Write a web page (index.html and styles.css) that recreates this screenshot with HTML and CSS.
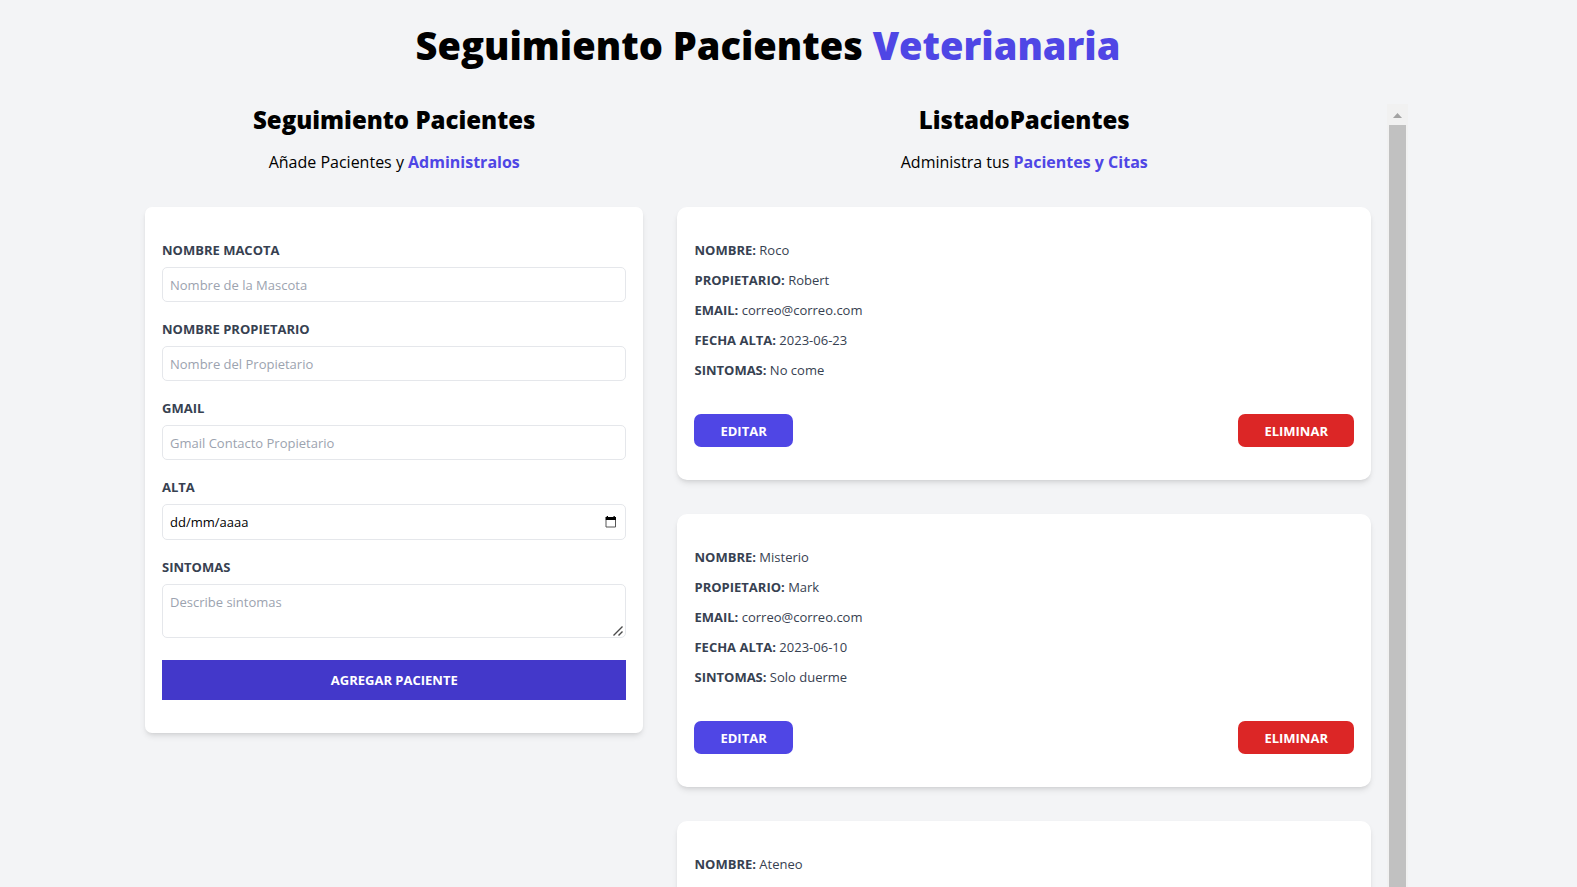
FILE: index.html
```html
<!DOCTYPE html>
<html lang="es">
<head>
<meta charset="utf-8">
<meta name="viewport" content="width=device-width, initial-scale=1">
<title>Seguimiento Pacientes Veterianaria</title>
<link rel="stylesheet" href="styles.css">
</head>
<body>
<div class="container">
  <h1 class="title">Seguimiento Pacientes <span class="accent">Veterianaria</span></h1>
  <main class="columns">
    <section class="form-column">
      <h2 class="subtitle">Seguimiento Pacientes</h2>
      <p class="lead">Añade Pacientes y <span class="accent strong">Administralos</span></p>
      <form class="card form-card">
        <div class="field">
          <label class="label" for="mascota">Nombre Macota</label>
          <input class="input" id="mascota" type="text" placeholder="Nombre de la Mascota">
        </div>
        <div class="field">
          <label class="label" for="propietario">Nombre Propietario</label>
          <input class="input" id="propietario" type="text" placeholder="Nombre del Propietario">
        </div>
        <div class="field">
          <label class="label" for="email">Gmail</label>
          <input class="input" id="email" type="email" placeholder="Gmail Contacto Propietario">
        </div>
        <div class="field">
          <label class="label" for="alta">Alta</label>
          <div class="input date-box">
            <input class="date-input" id="alta" type="text" placeholder="dd/mm/aaaa">
            <button class="date-button" type="button" aria-label="Abrir calendario">
              <svg width="12" height="12" viewBox="0 0 12 12"><path d="M1 4v7h9.500V4" fill="none" stroke="#555"/><path d="M.5 1h1.200V0h1.300v1h5.500V0h1.300v1H11v3H.5z" fill="#000"/></svg>
            </button>
          </div>
        </div>
        <div class="field">
          <label class="label" for="sintomas">Sintomas</label>
          <div class="textarea-box">
            <textarea class="input textarea" id="sintomas" placeholder="Describe sintomas"></textarea>
            <svg class="grip" width="10" height="10" viewBox="0 0 10 10" fill="none" stroke="#4a4a4a" stroke-width="1.400"><path d="M.5 9.500l9-9M5.500 9.500l4-4"/></svg>
          </div>
        </div>
        <button class="submit" type="submit">Agregar Paciente</button>
      </form>
    </section>
    <section class="list-column">
      <h2 class="subtitle">ListadoPacientes</h2>
      <p class="lead">Administra tus <span class="accent strong">Pacientes y Citas</span></p>
      <div class="list">
        <article class="card patient">
          <p class="row"><b class="key">Nombre:</b> Roco</p>
          <p class="row"><b class="key">Propietario:</b> Robert</p>
          <p class="row"><b class="key">Email:</b> correo@correo.com</p>
          <p class="row"><b class="key">Fecha Alta:</b> 2023-06-23</p>
          <p class="row"><b class="key">Sintomas:</b> No come</p>
          <div class="actions"><button class="btn edit" type="button">Editar</button><button class="btn delete" type="button">Eliminar</button></div>
        </article>
        <article class="card patient">
          <p class="row"><b class="key">Nombre:</b> Misterio</p>
          <p class="row"><b class="key">Propietario:</b> Mark</p>
          <p class="row"><b class="key">Email:</b> correo@correo.com</p>
          <p class="row"><b class="key">Fecha Alta:</b> 2023-06-10</p>
          <p class="row"><b class="key">Sintomas:</b> Solo duerme</p>
          <div class="actions"><button class="btn edit" type="button">Editar</button><button class="btn delete" type="button">Eliminar</button></div>
        </article>
        <article class="card patient">
          <p class="row"><b class="key">Nombre:</b> Ateneo</p>
        </article>
      </div>
    </section>
    <div class="scrollbar" aria-hidden="true">
      <div class="scroll-up"><svg width="9" height="5" viewBox="0 0 9 5"><path d="M0 5l4.500-5L9 5z" fill="#a3a3a3"/></svg></div>
      <div class="thumb"></div>
    </div>
  </main>
</div>
</body>
</html>
```
FILE: styles.css
```css
* { box-sizing: border-box; margin: 0; }

body {
  height: 100vh;
  overflow: hidden;
  padding-right: 41px;
  background: #f3f4f6;
  color: #000;
  font: 13px/20px "Open Sans", "Noto Sans", sans-serif;
}

button, input, textarea { font: inherit; }
button { border: 0; cursor: pointer; }

.container {
  display: flex;
  flex-direction: column;
  height: 100%;
  max-width: 1280px;
  margin: 0 auto;
  padding-top: 25px;
}

.title {
  margin-bottom: 38px;
  text-align: center;
  font-size: 38px;
  line-height: 41px;
  font-weight: 800;
}

.accent { color: #4f46e5; }
.strong { font-weight: 700; }

.columns {
  display: flex;
  flex: 1;
  min-height: 0;
}

.form-column {
  width: 41.6%;
  padding: 0 17px;
}

.list-column {
  flex: 1;
  padding: 0 16px 0 17px;
  overflow: hidden;
}

.subtitle {
  text-align: center;
  font-size: 24px;
  line-height: 32px;
  font-weight: 800;
}

.lead {
  margin: 14px 0 33px;
  text-align: center;
  font-size: 16px;
  line-height: 24px;
}

.card {
  padding: 33px 17px;
  background: #fff;
  box-shadow: 0 4px 6px -1px rgb(0 0 0 / 0.1), 0 2px 4px -2px rgb(0 0 0 / 0.1);
}

.form-card { border-radius: 7px; }
.field { margin-bottom: 17px; }

.label {
  display: block;
  margin-bottom: 7px;
  color: #374151;
  font-weight: 700;
  text-transform: uppercase;
}

.input {
  display: block;
  width: 100%;
  height: 35px;
  padding: 7px;
  border: 1px solid #e5e7eb;
  border-radius: 5px;
  background: #fff;
}

.input::placeholder { color: #9ca3af; }

.date-box {
  display: flex;
  align-items: center;
  height: 36px;
  padding-right: 8px;
}

.date-input {
  flex: 1;
  padding: 0;
  border: 0;
  background: none;
}

.date-input::placeholder { color: #000; }

.date-button {
  display: flex;
  padding: 0;
  background: none;
}

.textarea-box { position: relative; }

.textarea {
  height: 54px;
  resize: none;
}

.grip {
  position: absolute;
  right: 3px;
  bottom: 2px;
}

.submit {
  width: 100%;
  height: 40px;
  margin-top: 5px;
  background: #4338ca;
  color: #fff;
  font-weight: 700;
  text-transform: uppercase;
}

.list {
  display: flex;
  flex-direction: column;
  gap: 34px;
}

.patient {
  border-radius: 10px;
  color: #374151;
}

.row { margin-bottom: 10px; }

.key {
  font-weight: 700;
  text-transform: uppercase;
}

.actions {
  display: flex;
  justify-content: space-between;
  padding-top: 24px;
}

.btn {
  height: 33px;
  padding: 0 26px;
  border-radius: 7px;
  color: #fff;
  font-weight: 700;
  text-transform: uppercase;
}

.edit { background: #4f46e5; }
.delete { background: #dc2626; }

.scrollbar {
  display: flex;
  flex-direction: column;
  width: 21px;
  background: #f1f1f1;
}

.scroll-up {
  display: flex;
  align-items: center;
  justify-content: center;
  height: 21px;
  padding-top: 2px;
}

.thumb {
  flex: 1;
  margin: 0 2px;
  background: #c1c1c1;
}
```
